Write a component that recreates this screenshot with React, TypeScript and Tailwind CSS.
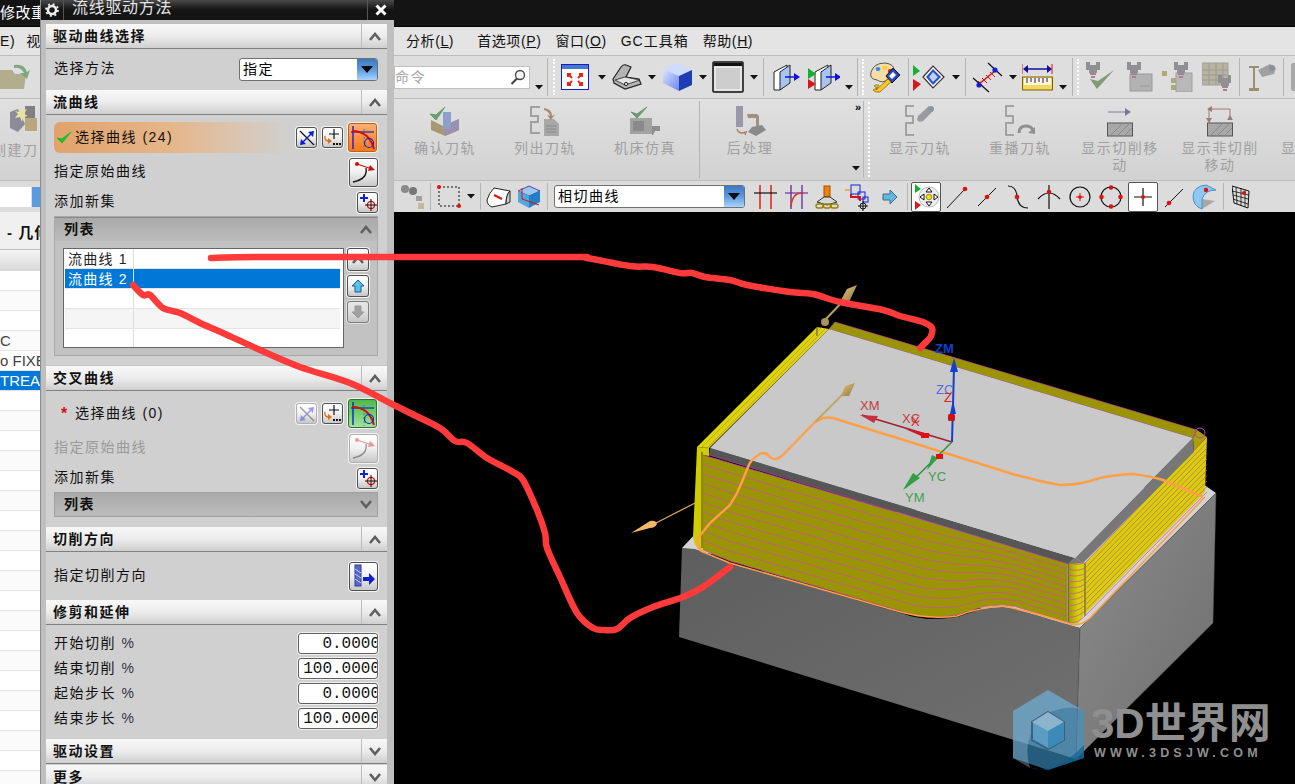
import React from "react";

const FONT = "font-['Liberation_Sans','Noto_Sans_CJK_SC',sans-serif]";

function Tri({ className = "" }: { className?: string }) {
  return (
    <svg width="8" height="5" viewBox="0 0 8 5" className={"shrink-0 " + className}>
      <path d="M0 0H8L4 4.5Z" fill="#111" />
    </svg>
  );
}
function Sep({ className = "" }: { className?: string }) {
  return <div className={"w-px self-stretch my-[2px] shrink-0 bg-[#b4b4b4] " + className} />;
}
function Grip({ className = "" }: { className?: string }) {
  return <div className={"w-[2px] self-stretch my-[3px] shrink-0 border-l-2 border-dotted border-white " + className} />;
}
function Ic({ w, h, className = "", children }: { w: number; h: number; className?: string; children: React.ReactNode }) {
  return (
    <svg width={w} height={h} viewBox={`0 0 ${w} ${h}`} className={"shrink-0 " + className}>
      {children}
    </svg>
  );
}

/* ---------- toolbar icons ---------- */
const FitIcon = () => (
  <Ic w={28} h={26}>
    <rect x="0.5" y="0.5" width="27" height="25" fill="#fff" stroke="#1020d0" />
    <rect x="1" y="1" width="26" height="4" fill="#4a78c8" />
    <g stroke="#f02010" strokeWidth="2" fill="none">
      <path d="M7 10l4 4M21 10l-4 4M7 21l4-4M21 21l-4-4" />
      <path d="M7 13v-3h3M21 13v-3h-3M7 18v3h3M21 18v3h-3" />
    </g>
  </Ic>
);
const SheetIcon = () => (
  <Ic w={30} h={26}>
    <path d="M1 15L9 3Q11 0 14 1L19 3 14 13 27 15 29 20 13 25 2 19Z" fill="#b4b4b4" stroke="#222" strokeWidth="1.2" />
    <path d="M3 16L13 13 28 16 13 21Z" fill="#e4e4e4" stroke="#222" strokeWidth=".8" />
    <circle cx="14" cy="20" r="1.6" fill="#eee" stroke="#222" />
  </Ic>
);
const CubeIcon = () => (
  <Ic w={31} h={30}>
    <defs>
      <linearGradient id="cb" x1="0" y1="0" x2="1" y2="1">
        <stop offset="0" stopColor="#dce6ff" />
        <stop offset="1" stopColor="#6a86ee" />
      </linearGradient>
    </defs>
    <path d="M1 7L14 1 30 8 17 14Z" fill="#cfdcfb" />
    <path d="M1 7L17 14V29L1 21Z" fill="url(#cb)" />
    <path d="M17 14L30 8V23L17 29Z" fill="#1f3cb4" />
  </Ic>
);
const RectIcon = () => (
  <Ic w={32} h={32}>
    <rect x="1" y="1" width="30" height="30" fill="#c8c8c8" rx="1" stroke="#111" strokeWidth="1.5" />
    <rect x="2" y="2" width="28" height="3" fill="#111" />
    <rect x="3" y="6" width="26" height="23" fill="#cdcdcd" stroke="#fff" />
  </Ic>
);
const PlaneIcon = ({ extra = false }: { extra?: boolean }) => (
  <Ic w={extra ? 32 : 28} h={27}>
    <g transform={extra ? "translate(6 0)" : ""}>
      <path d="M1 8L14 1V19L7 26H1Z" fill="#fff" stroke="#222" />
      <path d="M7 8L17 1V19L7 26Z" fill="#a8c4f0" stroke="#222" />
      <path d="M12 13H23" stroke="#1010e0" strokeWidth="1.5" />
      <path d="M21 9L27 13 21 17Z" fill="#1010e0" />
    </g>
    {extra && <path d="M0 4L8 10 0 15Z" fill="#14b030" />}
    {extra && <path d="M0 15L8 20 0 25Z" fill="#d81818" />}
  </Ic>
);
const PaletteIcon = () => (
  <Ic w={32} h={31}>
    <path d="M3 10Q6 1 17 1 26 2 26 8L24 14 20 17Q15 22 9 18 1 17 3 10Z" fill="#f6dca6" stroke="#555" />
    <ellipse cx="10" cy="7" rx="2.5" ry="2" fill="#2a90ff" />
    <ellipse cx="17" cy="6" rx="2.5" ry="2" fill="#f8d020" />
    <ellipse cx="22" cy="9" rx="2.2" ry="2" fill="#e02020" />
    <path d="M18 14L25 6 32 13 24 21Z" fill="#2c48c0" stroke="#111" />
    <path d="M21 14L25 10 28 13 24 17Z" fill="#fff" />
    <path d="M8 28L20 17 23 20 12 30Q7 31 5 28L9 26 6 24Q8 22 11 23Z" fill="#f4c820" stroke="#806000" strokeWidth=".7" />
  </Ic>
);
const ViewSetIcon = () => (
  <Ic w={32} h={30}>
    <path d="M0 3L7 9 0 14Z" fill="#14b030" />
    <path d="M0 17L8 22 0 29Z" fill="#d81818" />
    <path d="M10 15L20 4 31 15 20 26Z" fill="#fff" stroke="#333" strokeWidth="1.2" />
    <path d="M13 15L20 7 28 15 20 23Z" fill="#2d4ec8" />
    <path d="M16 15L20 10 25 15 20 20Z" fill="#bcd0f8" />
  </Ic>
);
const DottedLineIcon = () => (
  <Ic w={31} h={32}>
    <path d="M16 2L30 15M1 17L17 31" stroke="#111" strokeWidth="1.2" />
    <path d="M7 23L24 9" stroke="#e01010" strokeWidth="1.5" />
    <path d="M10 17l5 5M14 14l5 5M18 11l5 5M6 20l5 5" stroke="#e01010" />
    <circle cx="23" cy="9" r="2.6" fill="#1020e0" />
    <circle cx="7" cy="24" r="2.6" fill="#1020e0" />
  </Ic>
);
const RulerIcon = () => (
  <Ic w={31} h={28}>
    <path d="M0 1V11M30 1V11" stroke="#e01010" />
    <path d="M3 6H28" stroke="#1010a0" strokeWidth="1.5" />
    <path d="M6 2L1 6 6 10ZM25 2L30 6 25 10Z" fill="#1010a0" />
    <rect x="0.5" y="14" width="30" height="13" fill="#f2d860" stroke="#806000" />
    <rect x="2" y="15" width="27" height="7" fill="#fff8d0" />
    <path d="M5 15v5M9 15v4M13 15v5M17 15v4M21 15v5M25 15v4" stroke="#1010a0" />
  </Ic>
);
const GrayTool = () => (
  <g fill="#8f8f94">
    <path d="M3 0h4v3h6V0h4v8h-3v3h-8V8H3z" />
    <path d="M7 11h6v2H7zM8 14h4v2H8z" fill="#a88090" />
  </g>
);
const CheckTool = () => (
  <Ic w={31} h={30}>
    <GrayTool />
    <path d="M7 17L14 27 31 8 15 19Z" fill="#6f9060" opacity=".85" />
  </Ic>
);
const BoxTool = () => (
  <Ic w={29} h={30}>
    <rect x="6" y="12" width="22" height="17" fill="#b2b2b2" stroke="#999" />
    <GrayTool />
    <path d="M16 24h10" stroke="#999" />
  </Ic>
);
const TreeTool = () => (
  <Ic w={31} h={30}>
    <rect x="0" y="9" width="5" height="5" fill="#b0a878" />
    <rect x="9" y="16" width="5" height="5" fill="#b0a878" />
    <rect x="9" y="23" width="5" height="5" fill="#b0a878" />
    <rect x="14" y="11" width="16" height="19" fill="#b8b8b8" stroke="#a0a0a0" />
    <g transform="translate(9 0)"><GrayTool /></g>
  </Ic>
);
const GridTool = () => (
  <Ic w={29} h={30}>
    <rect x="0" y="1" width="26" height="22" fill="#b8b4a0" stroke="#a0a0a0" />
    <path d="M0 8H26M0 13H26M0 18H26M7 1V23M14 1V23M21 1V23" stroke="#9a9a9a" />
    <g transform="translate(13 13)"><GrayTool /></g>
  </Ic>
);
const PinTool = () => (
  <Ic w={28} h={30}>
    <path d="M1 4h10v2H7v20h4v3H1v-3h4V6H1z" fill="#9a9070" />
    <path d="M10 8L22 2 28 6 26 12 14 15Z" fill="#a0a0a0" />
    <circle cx="24" cy="6" r="3" fill="#8890a0" />
  </Ic>
);

/* ---------- ribbon icons ---------- */
const RConfirm = () => (
  <Ic w={32} h={30}>
    <path d="M2 14L14 20 30 13V24L16 30 2 24Z" fill="#a89a70" />
    <path d="M14 20L30 13V24L16 30Z" fill="#9a8fb0" />
    <rect x="14" y="6" width="8" height="17" fill="#8fa0c8" />
    <path d="M1 8L7 14 16 1 7 9Z" fill="#64a070" stroke="#64a070" />
  </Ic>
);
const RList = () => (
  <Ic w={30} h={30}>
    <path d="M10 1H1V10H8V16H1V27H10" fill="none" stroke="#a0a0a0" strokeWidth="2" />
    <path d="M14 13H24L29 18V30H14Z" fill="#a8a8a8" />
    <path d="M16 20h10M16 23h10M16 26h10" stroke="#888" />
    <path d="M14 2Q22 3 22 10L25 8 21 14 17 9 20 10Q19 5 14 4Z" fill="#a88868" />
  </Ic>
);
const RSim = () => (
  <Ic w={32} h={30}>
    <rect x="1" y="12" width="22" height="16" fill="#a2a2a2" />
    <rect x="4" y="15" width="11" height="10" fill="#8a8a8a" />
    <path d="M23 20h8v5h-5l-2 4h-1z" fill="#8e8e8e" />
    <path d="M2 6L8 12 18 1 8 8Z" fill="#6a9870" stroke="#6a9870" />
  </Ic>
);
const RPost = () => (
  <Ic w={32} h={32}>
    <rect x="2" y="1" width="7" height="21" fill="#9a98a8" />
    <path d="M13 9h10l2 2v11h-3v-9h-8z" fill="#a09080" />
    <path d="M18 22L28 20 32 25 22 31 14 27Z" fill="#8a8a8a" />
    <path d="M3 24Q5 30 12 27l-1 3" stroke="#b08060" strokeWidth="1.5" fill="none" />
  </Ic>
);
const RShow = () => (
  <Ic w={30} h={32}>
    <path d="M9 1H1V11H8V18H1V30H9" fill="none" stroke="#909090" strokeWidth="1.5" />
    <path d="M13 11L24 1 29 5 18 16Q14 18 12 15Z" fill="#9a9aa0" />
    <circle cx="26" cy="4" r="3" fill="#8898a8" />
  </Ic>
);
const RReplay = () => (
  <Ic w={30} h={32}>
    <path d="M9 1H1V11H8V18H1V30H9" fill="none" stroke="#909090" strokeWidth="1.5" />
    <path d="M14 28Q14 21 21 21 26 21 28 25" fill="none" stroke="#909090" strokeWidth="3" />
    <path d="M23 28L30 22V29Z" fill="#909090" />
  </Ic>
);
const RCut = () => (
  <Ic w={26} h={32}>
    <path d="M1 7H20" stroke="#7a7a98" />
    <path d="M18 3L24 7 18 11Z" fill="#7a7a98" />
    <rect x=".5" y="18" width="25" height="13" fill="#a8a8a8" stroke="#555" />
    <path d="M3 31L16 18M10 31L23 18M17 31L25 23" stroke="#8a8a8a" />
  </Ic>
);
const RNonCut = () => (
  <Ic w={28} h={32}>
    <path d="M3 14V4H24V14" fill="none" stroke="#a07878" />
    <path d="M6 1L1 4 6 7ZM0 13H6L3 18ZM21 15H27L24 10Z" fill="#a07878" />
    <rect x="1.5" y="18" width="25" height="13" fill="#a8a8a8" stroke="#555" />
    <path d="M4 31L17 18M11 31L24 18M18 31L26 23" stroke="#8a8a8a" />
  </Ic>
);

/* ---------- selection bar icons ---------- */
const S = {
  Filter: () => (
    <Ic w={24} h={26}>
      <circle cx="5" cy="5" r="4" fill="#8a8a8a" />
      <circle cx="13" cy="7" r="4" fill="#777" />
      <rect x="16" y="12" width="6" height="5" fill="#a0a0a0" />
      <rect x="18" y="19" width="6" height="6" fill="#c0b8a0" />
    </Ic>
  ),
  Dash: () => (
    <Ic w={24} h={24}>
      <rect x="2" y="2" width="20" height="19" fill="none" stroke="#111" strokeDasharray="2 2" />
      <circle cx="2" cy="2" r="2" fill="#e01010" />
      <circle cx="22" cy="21" r="2" fill="#e01010" />
    </Ic>
  ),
  Face: () => (
    <Ic w={25} h={22}>
      <path d="M1 14Q3 7 8 2L24 5Q20 9 20 18L6 21Q1 19 1 14Z" fill="#fff" stroke="#222" />
      <path d="M20 18Q20 9 24 5V16Z" fill="#ccc" stroke="#222" />
      <path d="M8 9L16 13" stroke="#e01010" strokeWidth="2" />
    </Ic>
  ),
  Box: () => (
    <Ic w={24} h={24}>
      <path d="M1 6L12 1 23 6 12 11Z" fill="#9bc8ef" stroke="#6040a0" />
      <path d="M1 6L12 11V23L1 17Z" fill="#50a8e0" />
      <path d="M12 11L23 6V17L12 23Z" fill="#2080c8" />
      <path d="M5 3V14L22 20" fill="none" stroke="#e01010" />
    </Ic>
  ),
  Cross: () => (
    <Ic w={23} h={24}>
      <path d="M6 0V24M17 0V24" stroke="#e01010" strokeWidth="1.4" />
      <path d="M0 8H23" stroke="#111" strokeWidth="1.2" />
    </Ic>
  ),
  Cross2: () => (
    <Ic w={23} h={24}>
      <path d="M6 0V24" stroke="#7030a0" strokeWidth="1.4" />
      <path d="M17 0V24" stroke="#7030a0" strokeWidth="1.4" />
      <path d="M0 8H23" stroke="#7030a0" strokeWidth="1.2" />
      <path d="M17 8Q7 8 6 22" stroke="#e03010" strokeWidth="1.4" fill="none" />
    </Ic>
  ),
  Chain: () => (
    <Ic w={24} h={24}>
      <rect x="9" y="1" width="6" height="11" fill="#f08010" stroke="#a05000" />
      <path d="M2 17L9 12H15L22 17 12 20Z" fill="#d8d8d8" stroke="#333" />
      <g fill="none" stroke="#998000" strokeWidth="1.4">
        <rect x="1" y="19" width="7" height="4" rx="2" />
        <rect x="8.5" y="19" width="7" height="4" rx="2" />
        <rect x="16" y="19" width="7" height="4" rx="2" />
      </g>
    </Ic>
  ),
  Color: () => (
    <Ic w={24} h={28}>
      <path d="M0 7H5" stroke="#f0a020" strokeWidth="1.5" />
      <rect x="6" y="2" width="9" height="9" fill="none" stroke="#1020e0" />
      <rect x="13" y="9" width="7" height="7" fill="none" stroke="#1020e0" />
      <rect x="18" y="14" width="5" height="5" fill="none" stroke="#1020e0" />
      <path d="M6 11V14H15V18" fill="none" stroke="#e01010" strokeWidth="2" />
      <circle cx="18" cy="23" r="3" fill="none" stroke="#111" />
      <path d="M13 23H23M18 18V28" stroke="#111" />
    </Ic>
  ),
  Arrow: () => (
    <Ic w={16} h={16}>
      <path d="M1 5H8V1L15 8 8 15V11H1Z" fill="#60b8e0" stroke="#406a80" />
    </Ic>
  ),
  Snap: () => (
    <Ic w={29} h={30}>
      <path d="M3 2L9 7 3 11Z" fill="#14b030" />
      <path d="M3 19L9 23 3 28Z" fill="#d81818" />
      <circle cx="17" cy="15" r="10" fill="#eee" stroke="#bbb" />
      <path d="M8 15l4-3v6zM26 15l-4-3v6zM17 6l-3 4h6zM17 24l-3-4h6z" fill="#fff" stroke="#111" />
      <circle cx="17" cy="15" r="2.8" fill="#f0e020" stroke="#a09000" />
    </Ic>
  ),
  End: () => (
    <Ic w={22} h={24}>
      <path d="M1 23L19 4" stroke="#111" />
      <circle cx="19" cy="4" r="2.3" fill="#e01010" />
    </Ic>
  ),
  Mid: () => (
    <Ic w={22} h={24}>
      <path d="M1 21L19 3" stroke="#111" />
      <circle cx="10" cy="12" r="2.3" fill="#e01010" />
    </Ic>
  ),
  Ctl: () => (
    <Ic w={22} h={24}>
      <path d="M1 1Q9 1 10 11 11 23 21 23" fill="none" stroke="#111" strokeWidth="1.2" />
      <circle cx="10" cy="12" r="2.3" fill="#e01010" />
    </Ic>
  ),
  Int: () => (
    <Ic w={24} h={24}>
      <path d="M1 14Q12 2 23 14M12 0V24" fill="none" stroke="#111" strokeWidth="1.2" />
      <circle cx="12" cy="7" r="2.3" fill="#e01010" />
    </Ic>
  ),
  Ctr: () => (
    <Ic w={22} h={22}>
      <circle cx="11" cy="11" r="10" fill="none" stroke="#111" strokeWidth="1.2" />
      <path d="M11 7v8M7 11h8" stroke="#e01010" />
      <circle cx="11" cy="11" r="1.8" fill="#e01010" />
    </Ic>
  ),
  Quad: () => (
    <Ic w={24} h={24}>
      <circle cx="12" cy="12" r="10" fill="none" stroke="#111" strokeWidth="1.2" />
      <circle cx="12" cy="2.5" r="2.3" fill="#e01010" />
      <circle cx="12" cy="21.5" r="2.3" fill="#e01010" />
      <circle cx="2.5" cy="12" r="2.3" fill="#e01010" />
      <circle cx="21.5" cy="12" r="2.3" fill="#e01010" />
    </Ic>
  ),
  Plus: () => (
    <Ic w={20} h={20}>
      <path d="M10 1V19M1 10H19" stroke="#111" strokeWidth="1.2" />
      <circle cx="10" cy="10" r="2" fill="#e01010" />
    </Ic>
  ),
  Tan: () => (
    <Ic w={20} h={22}>
      <path d="M1 21L19 3" stroke="#111" />
      <circle cx="5" cy="17" r="2.3" fill="#e01010" />
    </Ic>
  ),
  Surf: () => (
    <Ic w={25} h={26}>
      <path d="M10 15L23 17 10 25Z" fill="#a8a8a8" />
      <path d="M1 12Q2 2 14 1L24 6Q13 6 10 15L10 25Q1 22 1 12Z" fill="#8cc8f0" stroke="#4a90c8" />
      <circle cx="14" cy="6" r="2.2" fill="#e01010" />
    </Ic>
  ),
  Mesh: () => (
    <Ic w={18} h={24}>
      <path d="M0 1L17 6 16 23 2 18Z" fill="none" stroke="#111" />
      <path d="M0 6L17 10M1 10L16 14M1 14L16 19M4 2L5 19M9 3L9 21M13 5L13 22" stroke="#111" strokeWidth=".8" />
      <circle cx="12" cy="8" r="2" fill="#e01010" />
    </Ic>
  ),
};

/* ---------- dialog icons ---------- */
const Chev = ({ up = true }: { up?: boolean }) => (
  <svg width="12" height="9" viewBox="0 0 12 9" className="shrink-0">
    <path d={up ? "M1 8L6 2 11 8" : "M1 1L6 7 11 1"} fill="none" stroke="#5f5f5f" strokeWidth="2.6" />
  </svg>
);
function Btn({ w, h, className = "", children }: { w: string; h: string; className?: string; children: React.ReactNode }) {
  return (
    <div className={`${w} ${h} shrink-0 flex items-center justify-center rounded-[3px] border border-[#505050] shadow-[0_0_0_1px_#f2f2f2] bg-gradient-to-b from-[#ffffff] via-[#f0f0f0] to-[#c8c8c8] ${className}`}>
      {children}
    </div>
  );
}
const SwapIco = ({ dim = false }: { dim?: boolean }) => (
  <Ic w={16} h={16} className={dim ? "opacity-40" : ""}>
    <path d="M1 1L15 15" stroke="#111" strokeWidth="1.2" />
    <path d="M2 14L14 2" stroke="#1020d0" strokeWidth="1.5" />
    <path d="M15 1L9 2 14 7ZM1 15L7 14 2 9Z" fill="#1020d0" />
  </Ic>
);
const PlusMore = () => (
  <Ic w={19} h={17}>
    <path d="M11 0V10M6 5H16" stroke="#111" strokeWidth="1.2" />
    <path d="M2 7Q1 12 6 12" fill="none" stroke="#e07010" strokeWidth="1.4" />
    <path d="M5 9L9 12 5 15Z" fill="#e07010" />
    <path d="M10 14h2v2h-2zM13 14h2v2h-2zM16 14h2v2h-2z" fill="#111" />
  </Ic>
);
const CurveSel = () => (
  <Ic w={26} h={26}>
    <path d="M3 1V24" stroke="#1020d0" strokeWidth="1.4" />
    <path d="M1 7H24" stroke="#1020d0" strokeWidth="1.2" />
    <path d="M14 4V25" stroke="#10a060" strokeDasharray="2 2" />
    <path d="M2 6Q19 6 24 24" fill="none" stroke="#d01010" strokeWidth="2" />
    <circle cx="19" cy="18" r="4.5" fill="none" stroke="#1020d0" strokeWidth="1.2" />
  </Ic>
);
const OrigCurve = ({ dim = false }: { dim?: boolean }) => (
  <Ic w={24} h={24} className={dim ? "opacity-40" : ""}>
    <path d="M1 22Q16 19 14 8" fill="none" stroke="#111" strokeWidth="1.3" />
    <circle cx="5" cy="4" r="2" fill="#d01010" />
    <path d="M5 4L20 9" stroke="#d01010" strokeWidth="1.2" />
    <path d="M23 10L16 11 18 5Z" fill="#d01010" />
  </Ic>
);
const AddSet = () => (
  <Ic w={18} h={18}>
    <path d="M5 1V9M1 5H9" stroke="#1020e0" strokeWidth="2" />
    <circle cx="12" cy="12" r="3.6" fill="none" stroke="#e01010" strokeWidth="1.4" />
    <path d="M12 6V18M6 12H18" stroke="#111" />
  </Ic>
);
const DirIco = () => (
  <Ic w={24} h={24}>
    <rect x="3" y="1" width="6" height="21" fill="#5868c8" stroke="#2c3ca0" />
    <path d="M3 5L9 9M3 10L9 14M3 15L9 19" stroke="#c8d0f8" />
    <path d="M11 13H17V9L23 15 17 21V17H11Z" fill="#1020d0" />
  </Ic>
);

/* ---------- dialog pieces ---------- */
function Section({ title, up = true }: { title: string; up?: boolean }) {
  return (
    <div className="h-[25px] shrink-0 flex items-stretch bg-gradient-to-b from-[#f8f8f8] via-[#ececec] to-[#cfcfcf] border-b border-[#808080]">
      <div className="flex-1 pl-[7px] flex items-center text-[14px] font-bold tracking-[1.5px] text-[#111]">{title}</div>
      <div className="w-[26px] border-l border-[#bdbdbd] flex items-center justify-center"><Chev up={up} /></div>
    </div>
  );
}
function Label({ children, dim = false }: { children: React.ReactNode; dim?: boolean }) {
  return <span className={`-mt-[2px] text-[14px] tracking-[1.5px] whitespace-nowrap ${dim ? "text-[#9a9a9a]" : "text-[#111]"}`}>{children}</span>;
}
function Dropdown({ text, className = "" }: { text: string; className?: string }) {
  return (
    <div className={`h-[23px] flex items-stretch rounded-[3px] border border-[#707070] bg-white overflow-hidden ${className}`}>
      <div className="flex-1 pl-[3px] flex items-center text-[14px] tracking-[1.5px] text-black">{text}</div>
      <div className="w-[20px] flex items-center justify-center bg-gradient-to-b from-[#3c78c0] via-[#5c9ae0] to-[#a8d4f8]">
        <svg width="12" height="7" viewBox="0 0 12 7"><path d="M0 0H12L6 7Z" fill="#0a0a0a" /></svg>
      </div>
    </div>
  );
}
function NumRow({ label, value }: { label: string; value: string }) {
  return (
    <div className="h-[25px] flex items-center justify-between">
      <span className="flex mt-[2px]"><Label>{label} <span className="text-[#334]">%</span></Label></span>
      <div className="w-[80px] h-[21px] bg-white rounded-[3px] border border-[#606060] shadow-[0_0_0_1px_#efefef] overflow-hidden flex justify-end items-center">
        <span className="text-[16px] font-['Liberation_Mono',monospace] -mr-[3px] whitespace-nowrap text-[#111]">{value}</span>
      </div>
    </div>
  );
}
function ListRow({ text, sel, alt }: { text?: string; sel?: boolean; alt?: boolean }) {
  return (
    <div className={`h-[20px] flex border-b border-[#e4e4e4] ${sel ? "bg-[#0078d7] text-white" : alt ? "bg-[#f5f5f5] text-[#222]" : "bg-white text-[#222]"}`}>
      <div className={`w-[69px] pl-[3px] text-[14px] tracking-[1.2px] leading-[20px] border-r ${sel ? "border-[#d8e8f8]" : "border-[#dedede]"}`}>{text}</div>
    </div>
  );
}
function Dialog() {
  return (
    <div className={`absolute left-[40px] top-0 w-[354px] h-[784px] flex flex-col bg-[#bfbfbf] border-l border-[#8c8c8c] ${FONT}`}>
      <div className="h-[20px] shrink-0 flex items-center bg-gradient-to-b from-[#4a4a4a] via-[#141414] to-[#141414] text-[#e4e4e4] overflow-hidden">
        <div className="w-[22px] flex items-center justify-center">
          <svg width="14" height="14" viewBox="0 0 14 14">
            <circle cx="7" cy="7" r="4" fill="none" stroke="#eee" strokeWidth="2.6" />
            <circle cx="7" cy="7" r="6" fill="none" stroke="#eee" strokeWidth="1.8" strokeDasharray="2 2.7" />
          </svg>
        </div>
        <div className="w-px h-full bg-[#555]" />
        <div className="flex-1 pl-[8px] -mt-[4px] text-[16px] tracking-[0.7px] leading-[14px]">流线驱动方法</div>
        <div className="w-px h-full bg-[#555]" />
        <div className="w-[26px] flex items-center justify-center">
          <svg width="12" height="12" viewBox="0 0 12 12"><path d="M1.5 1.5L10.5 10.5M10.5 1.5L1.5 10.5" stroke="#fff" strokeWidth="3" /></svg>
        </div>
      </div>
      <div className="flex-1 mt-[4px] ml-[5px] mr-[7px] flex flex-col overflow-hidden bg-[#d0d0d0]">
        <Section title="驱动曲线选择" />
        <div className="h-[41px] shrink-0 pl-[8px] pr-[9px] flex items-center justify-between">
          <Label>选择方法</Label>
          <Dropdown text="指定" className="w-[139px]" />
        </div>
        <Section title="流曲线" />
        <div className="h-[251px] shrink-0 pl-[8px] pr-[9px] pt-[7px] flex flex-col border-b border-[#c4c4c4]">
          <div className="h-[31px] flex items-center">
            <div className="w-[236px] h-[31px] rounded-l-[6px] flex items-center bg-gradient-to-r from-[#e2a26a] via-[#e5b68a] to-[#d0d0d0] pl-[2px]">
              <svg width="16" height="14" viewBox="0 0 16 14"><path d="M1 7L6 12 15 1 6 8Z" fill="#18c030" stroke="#18c030" /></svg>
              <span className="ml-[3px] mt-[2px] flex"><Label>选择曲线 (24)</Label></span>
            </div>
            <Btn w="w-[21px]" h="h-[21px]" className="ml-[6px]"><SwapIco /></Btn>
            <Btn w="w-[21px]" h="h-[21px]" className="ml-[5px]"><PlusMore /></Btn>
            <Btn w="w-[29px]" h="h-[29px]" className="ml-[5px] !from-[#ffb070] !via-[#ff9040] !to-[#ff7818] !border-[#c06010]"><CurveSel /></Btn>
          </div>
          <div className="h-[30px] mt-[4px] flex items-center justify-between">
            <Label>指定原始曲线</Label>
            <Btn w="w-[29px]" h="h-[29px]"><OrigCurve /></Btn>
          </div>
          <div className="h-[22px] mt-[4px] flex items-center justify-between">
            <Label>添加新集</Label>
            <Btn w="w-[21px]" h="h-[21px]"><AddSet /></Btn>
          </div>
          <div className="h-[140px] mt-[3px] flex flex-col bg-[#c2c2c2] border border-[#a8a8a8]">
            <div className="h-[24px] shrink-0 flex items-center justify-between pl-[9px] pr-[5px] bg-gradient-to-b from-[#aaaaaa] to-[#bcbcbc] border-t border-[#888]">
              <span className="text-[14px] font-bold tracking-[1.5px] text-[#111]">列表</span>
              <Chev />
            </div>
            <div className="mt-[7px] ml-[8px] flex">
              <div className="w-[281px] h-[100px] border border-[#666] bg-white overflow-hidden pr-[3px] pl-[1px]">
                <ListRow text="流曲线 1" />
                <ListRow text="流曲线 2" sel />
                <ListRow />
                <ListRow alt />
                <ListRow />
              </div>
              <div className="ml-[3px] flex flex-col gap-[4px]">
                <Btn w="w-[22px]" h="h-[23px]"><Chev /></Btn>
                <Btn w="w-[22px]" h="h-[22px]">
                  <svg width="14" height="14" viewBox="0 0 14 14"><path d="M7 1L13 7H10V13H4V7H1Z" fill="#58c0e8" stroke="#1c5c90" /></svg>
                </Btn>
                <Btn w="w-[22px]" h="h-[22px]" className="opacity-60">
                  <svg width="14" height="14" viewBox="0 0 14 14"><path d="M7 13L13 7H10V1H4V7H1Z" fill="#8a8a8a" stroke="#808080" /></svg>
                </Btn>
              </div>
            </div>
          </div>
        </div>
        <Section title="交叉曲线" />
        <div className="h-[136px] shrink-0 pl-[8px] pr-[9px] pt-[7px] flex flex-col">
          <div className="h-[31px] flex items-center">
            <div className="w-[236px] flex items-center pl-[7px]">
              <span className="w-[14px] text-[#d01010] text-[16px] font-bold leading-[16px]">*</span>
              <span className="flex mt-[2px]"><Label>选择曲线 (0)</Label></span>
            </div>
            <Btn w="w-[21px]" h="h-[21px]" className="ml-[6px] !border-[#b0b0b0]"><SwapIco dim /></Btn>
            <Btn w="w-[21px]" h="h-[21px]" className="ml-[5px]"><PlusMore /></Btn>
            <Btn w="w-[29px]" h="h-[29px]" className="ml-[5px] !from-[#50b850] !via-[#70d070] !to-[#a8e0a0] !border-[#307030]"><CurveSel /></Btn>
          </div>
          <div className="h-[30px] mt-[4px] flex items-center justify-between">
            <Label dim>指定原始曲线</Label>
            <Btn w="w-[29px]" h="h-[29px]" className="!border-[#b0b0b0]"><OrigCurve dim /></Btn>
          </div>
          <div className="h-[22px] mt-[4px] flex items-center justify-between">
            <Label>添加新集</Label>
            <Btn w="w-[21px]" h="h-[21px]"><AddSet /></Btn>
          </div>
          <div className="h-[25px] mt-[3px] flex items-center justify-between pl-[9px] pr-[5px] bg-gradient-to-b from-[#aaaaaa] to-[#bcbcbc] border border-[#a0a0a0]">
            <span className="text-[14px] font-bold tracking-[1.5px] text-[#111]">列表</span>
            <Chev up={false} />
          </div>
        </div>
        <Section title="切削方向" />
        <div className="h-[48px] shrink-0 pl-[8px] pr-[9px] flex items-center justify-between">
          <Label>指定切削方向</Label>
          <Btn w="w-[29px]" h="h-[29px]"><DirIco /></Btn>
        </div>
        <Section title="修剪和延伸" />
        <div className="h-[114px] shrink-0 pl-[8px] pr-[9px] pt-[6px] flex flex-col">
          <NumRow label="开始切削" value="0.0000" />
          <NumRow label="结束切削" value="100.0000" />
          <NumRow label="起始步长" value="0.0000" />
          <NumRow label="结束步长" value="100.0000" />
        </div>
        <Section title="驱动设置" up={false} />
        <div className="h-px shrink-0 bg-[#d0d0d0]" />
        <Section title="更多" up={false} />
      </div>
    </div>
  );
}

/* ---------- menu ---------- */
function M({ t, k, className = "" }: { t: string; k: string; className?: string }) {
  return (
    <span className={"whitespace-nowrap " + className}>
      {t}(<span className="underline">{k}</span>)
    </span>
  );
}
function RibBtn({ label, label2, w = "w-[100px]", children }: { label: string; label2?: string; w?: string; children: React.ReactNode }) {
  return (
    <div className={`${w} shrink-0 flex flex-col items-center pt-[5px] text-[14px] tracking-[1.5px] leading-[17px] text-[#a0a0a0]`}>
      <div className="h-[33px] flex items-center justify-center">{children}</div>
      <span className="mt-[3px] whitespace-nowrap">{label}</span>
      {label2 && <span>{label2}</span>}
    </div>
  );
}

/* ---------- viewport drawing ---------- */
const BX = [703, 730, 897, 912, 927, 945, 957, 968, 980, 992, 1003, 1015, 1033, 1070];
const BY = [550, 561, 610, 614.5, 617, 616.5, 615, 611.5, 607.5, 605.5, 605, 606.5, 612, 623];
function bottomY(x: number) {
  for (let i = 0; i < BX.length - 1; i++) {
    if (x <= BX[i + 1]) {
      const t = (x - BX[i]) / (BX[i + 1] - BX[i]);
      return BY[i] + (BY[i + 1] - BY[i]) * t;
    }
  }
  return BY[BY.length - 1];
}
function topY(x: number) {
  return 455 + ((x - 703) * (563 - 455)) / 365;
}
function xs() {
  const r: number[] = [];
  for (let x = 703; x <= 1069; x += 4) r.push(x);
  return r;
}
function wallLine(t: number) {
  return xs()
    .map((x) => `${x},${(topY(x) + t * (bottomY(x) - topY(x))).toFixed(1)}`)
    .join(" ");
}
function wallPoly() {
  const p = xs();
  const a = p.map((x) => `${x},${topY(x).toFixed(1)}`);
  const b = p.map((x) => `${x},${bottomY(x).toFixed(1)}`).reverse();
  return a.concat(b).join(" ");
}
function facePoly() {
  const a = ["682,548", "695,549"];
  xs().forEach((x) => a.push(`${x},${(bottomY(x) + 2).toFixed(1)}`));
  a.push("1080,628", "1076,759", "679,637");
  return a.join(" ");
}
const TEN = [0, 0.1, 0.2, 0.3, 0.4, 0.5, 0.6, 0.7, 0.8, 0.9, 1];

function smooth(p: number[][]) {
  let d = `M${p[0][0]} ${p[0][1]}`;
  for (let i = 0; i < p.length - 1; i++) {
    const a = p[Math.max(i - 1, 0)];
    const b = p[i];
    const c = p[i + 1];
    const e = p[Math.min(i + 2, p.length - 1)];
    const c1x = b[0] + (c[0] - a[0]) / 6;
    const c1y = b[1] + (c[1] - a[1]) / 6;
    const c2x = c[0] - (e[0] - b[0]) / 6;
    const c2y = c[1] - (e[1] - b[1]) / 6;
    d += `C${c1x.toFixed(1)} ${c1y.toFixed(1)} ${c2x.toFixed(1)} ${c2y.toFixed(1)} ${c[0]} ${c[1]}`;
  }
  return d;
}
const RED1 = [
  [211, 258], [257, 257], [390, 257], [570, 257], [587, 258], [630, 266], [653, 267], [680, 273], [692, 273], [705, 277],
  [730, 280], [747, 285], [790, 292], [813, 294], [840, 302], [883, 310], [900, 316], [923, 322], [932, 328], [931, 336],
  [927, 341], [920, 348],
];
const RED2 = [
  [133, 285], [143, 295], [150, 295], [163, 308], [180, 313], [200, 323], [223, 333], [260, 350], [300, 367], [350, 383],
  [390, 403], [410, 413], [440, 428], [455, 441], [467, 443], [487, 458], [513, 472], [523, 480], [537, 510], [545, 533],
  [547, 548], [560, 577], [577, 613], [593, 628], [605, 630], [617, 629], [630, 618], [653, 607], [683, 597], [703, 587], [730, 567],
];

function Viewport() {
  return (
    <svg viewBox="40 212 1255 572" className="w-full h-full block">
      <defs>
        <linearGradient id="rf" x1="0" y1="0" x2="1" y2="1">
          <stop offset="0" stopColor="#8c8c8c" />
          <stop offset="1" stopColor="#6e6e6e" />
        </linearGradient>
        <linearGradient id="lf" x1="0" y1="0" x2="1" y2="1">
          <stop offset="0" stopColor="#5e5e5e" />
          <stop offset="1" stopColor="#707070" />
        </linearGradient>
        <linearGradient id="cnr" x1="0" y1="0" x2="1" y2="0">
          <stop offset="0" stopColor="#9a9400" />
          <stop offset=".6" stopColor="#d8d400" />
          <stop offset="1" stopColor="#d0cc00" />
        </linearGradient>
        <linearGradient id="gold" x1="0" y1="0" x2="1" y2="1">
          <stop offset="0" stopColor="#e8c880" />
          <stop offset="1" stopColor="#8a7440" />
        </linearGradient>
      </defs>
      {/* base block */}
      <polygon points="682,548 697,532 1200,482 1216,493 1080,628" fill="#d4d4d4" />
      <polygon points={facePoly()} fill="url(#lf)" />
      <polygon points="1080,628 1216,493 1213,623 1076,759" fill="url(#rf)" stroke="#505050" strokeWidth=".5" />
      {/* walls */}
      <polygon points="1085,563 1207,437 1205,492 1083,616" fill="#d6d200" />
      <polygon points="1193,438 1197,430 1207,437 1194,451" fill="#a8a200" />
      <polygon points={wallPoly()} fill="#9a9400" />
      <polygon points="1068,563 1085,563 1083,616 1078,624 1068,623" fill="url(#cnr)" />
      <polygon points="697,447 709,448 709,456 703,455 703,550 695,545 693,537" fill="#d0cc00" />
      <path d="M702 452V548" stroke="#333" strokeWidth=".9" />
      <path d="M1068 563V622" stroke="#333" strokeWidth=".8" />
      <path d="M1085 563V616" stroke="#333" strokeWidth=".8" />
      {TEN.map((t) => (
        <polyline key={t} points={wallLine(t)} fill="none" stroke="#d048b8" strokeWidth=".7" />
      ))}
      {TEN.map((t) => (
        <path key={t} d={`M1085 ${(563 + t * 53).toFixed(1)} L1207 ${(437 + t * 55).toFixed(1)}`} stroke="#d048b8" strokeWidth=".7" />
      ))}
      {TEN.map((t) => (
        <path key={t} d={`M1068 ${(563 + t * 60).toFixed(1)} Q1077 ${(566 + t * 58).toFixed(1)} 1085 ${(563 + t * 53).toFixed(1)}`} fill="none" stroke="#d048b8" strokeWidth=".7" />
      ))}
      {/* upper strips */}
      <polygon points="835,322 1197,430 1193,438 829,329" fill="#9a9400" stroke="#d040c0" strokeWidth=".6" />
      <polygon points="817,327 829,329 709,448 697,447" fill="#dad600" />
      <path d="M822 327L702 447M826 328L706 449" stroke="#c858c0" strokeWidth=".5" />
      <path d="M817 327V336" stroke="#555" />
      <polygon points="710,448 1075,558 1068,564 709,455" fill="#565656" />
      <path d="M709 455L1068 564" stroke="#d040c0" strokeWidth=".6" />
      <polygon points="1193,438 1194,452 1083,563 1075,558" fill="#777" />
      <polygon points="1068,564 1075,558 1083,563" fill="#777" />
      <polygon points="829,329 1193,438 1075,558 710,448" fill="#c9c9c9" />
      <circle cx="1200" cy="433" r="5" fill="none" stroke="#c040c0" />
      {/* tool path */}
      <path
        d="M815 422L823 418Q827 417 833 418L1000 470Q1030 480 1060 485 1080 485 1100 478 1120 474 1133 474 1150 476 1163 480L1187 490 1203 497"
        fill="none"
        stroke="#ff9f47"
        strokeWidth="2.6"
      />
      <path
        d="M815 422L783 455Q775 462 770 457 765 451 760 454 750 460 748 467 743 480 737 493L730 505 710 523 698 538Q695 547 703 552"
        fill="none"
        stroke="#ff9f47"
        strokeWidth="2.4"
      />
      <path
        d="M703 552L730 563 897 611Q927 620 957 616 980 607 1003 606 1033 612 1070 624 1080 627 1090 618L1205 497"
        fill="none"
        stroke="#ff9f47"
        strokeWidth="1.6"
      />
      {/* gold arrows */}
      <path d="M823 322L848 296" stroke="#b8a060" strokeWidth="2" />
      <path d="M857 285L847 289 841 300 849 302Z" fill="url(#gold)" />
      <circle cx="825" cy="322" r="4" fill="#a89060" />
      <path d="M815 422L847 390" stroke="#c0a868" strokeWidth="2" />
      <path d="M855 383L845 386 841 396 849 396Z" fill="url(#gold)" />
      <path d="M695 503L656 523" stroke="#e8a860" strokeWidth="1.2" />
      <path d="M631 533L650 521Q656 520 657 524 655 528 650 528Z" fill="#f0b868" />
      {/* triad */}
      <path d="M952 442L954 368" stroke="#1040d0" strokeWidth="2" />
      <path d="M954 358L950 372H958Z" fill="#1040d0" />
      <path d="M953 400L950 414H956Z" fill="#1040d0" />
      <rect x="948" y="414" width="7" height="7" rx="1.5" fill="#d01010" />
      <path d="M952 442L862 415" stroke="#a02030" strokeWidth="1.5" />
      <path d="M860 415L878 416 874 423Z" fill="#c83040" />
      <path d="M905 429L930 434 926 438Z" fill="#d01828" />
      <rect x="921" y="433" width="8" height="5" fill="#e01010" />
      <path d="M952 442L905 488" stroke="#309040" strokeWidth="1.5" />
      <path d="M903 490L920 478 913 473Z" fill="#30a040" />
      <path d="M927 470L938 458 932 455Z" fill="#30a040" />
      <rect x="936" y="454" width="7" height="5" fill="#e01010" />
      <g fontFamily="Liberation Sans, sans-serif" fontSize="13">
        <text x="935" y="353" fill="#1040d0" fontWeight="700">ZM</text>
        <text x="936" y="394" fill="#5070e0">ZC</text>
        <text x="944" y="402" fill="#e02020">Z</text>
        <text x="860" y="410" fill="#c04048">XM</text>
        <text x="902" y="423" fill="#c04048">XC</text>
        <text x="911" y="426" fill="#e02020">X</text>
        <text x="928" y="481" fill="#40a050">YC</text>
        <text x="905" y="502" fill="#40a050">YM</text>
      </g>
      {/* watermark */}
      <g>
        <polygon points="1048,690 1084,711 1084,758 1048,770 1013,758 1013,711" fill="#3c94cc" opacity=".62" />
        <path d="M1048 690L1013 711V758L1030 768Q1020 735 1048 713 1072 703 1084 711Z" fill="#a8c8dc" opacity=".35" />
        <path d="M1030 768Q1055 775 1084 745V758L1048 770Z" fill="#0a5a88" opacity=".6" />
        <polygon points="1048,712 1064,722 1064,740 1048,749 1032,740 1032,722" fill="#5b9cc4" stroke="#38617c" strokeWidth="2" />
        <polygon points="1048,712 1064,722 1048,731 1032,722" fill="#8cb4cc" />
        <polygon points="1048,731 1064,722 1064,740 1048,749" fill="#3c8ab8" />
      </g>
      <text x="1091" y="738" fill="#8f8f8f" fontFamily="Liberation Sans, Noto Sans CJK SC, sans-serif" fontWeight="700" fontSize="42">3D世界网</text>
      <text x="1094" y="757" fill="#8f8f8f" fontFamily="Liberation Sans, sans-serif" fontWeight="700" fontSize="12.5" letterSpacing="4.2">WWW.3DSJW.COM</text>
    </svg>
  );
}

const NavRows = [
  { t: "" }, { t: "" }, { t: "" },
  { t: "C" }, { t: "o FIXE" }, { t: "TREAM", sel: true },
  { t: "" }, { t: "" }, { t: "" }, { t: "" }, { t: "" }, { t: "" }, { t: "" }, { t: "" },
  { t: "" }, { t: "" }, { t: "" }, { t: "" }, { t: "" }, { t: "" }, { t: "" }, { t: "" },
  { t: "" }, { t: "" }, { t: "" }, { t: "" },
];

export default function App() {
  return (
    <div className={`relative w-[1295px] h-[784px] overflow-hidden bg-black flex flex-col ${FONT}`}>
      {/* title bar */}
      <div className="h-[27px] shrink-0 bg-[#141414] flex items-center border-b border-black text-white text-[15px] leading-none">
        <span className="tracking-[0.5px] mb-[2px]">修改重</span>
      </div>
      {/* menu */}
      <div className="h-[29px] shrink-0 bg-[#e4e4e4] border-b border-[#bdbdbd] flex items-center text-[14px] text-[#111] tracking-[0.6px]">
        <div className="w-[406px] flex shrink-0 whitespace-nowrap overflow-hidden">
          <span>E)</span><span className="ml-[11px]">视</span>
        </div>
        <M t="分析" k="L" />
        <M t="首选项" k="P" className="ml-[23px]" />
        <M t="窗口" k="O" className="ml-[14px]" />
        <span className="ml-[14px] whitespace-nowrap tracking-[1px]">GC工具箱</span>
        <M t="帮助" k="H" className="ml-[14px]" />
      </div>
      {/* toolbar 1 */}
      <div className="h-[43px] shrink-0 bg-[#dedede] border-b border-[#bdbdbd] flex items-center">
        <div className="w-[394px] shrink-0">
          <svg width="30" height="30" viewBox="0 0 30 30">
            <path d="M0 8H12L15 12H26L24 27H0Z" fill="#b0ae8c" />
            <path d="M14 3Q24 1 27 10L30 8 27 17 20 11 24 11Q21 5 14 6Z" fill="#80a880" />
          </svg>
        </div>
        <div className="w-[136px] h-[23px] shrink-0 bg-white border border-[#c0c0c0] flex items-center justify-between pr-[3px] text-[14px] tracking-[1.5px] text-[#a8a8a8]">
          <span>命令</span>
          <svg width="16" height="16" viewBox="0 0 16 16">
            <circle cx="10" cy="6" r="4.5" fill="#f4f4f4" stroke="#444" strokeWidth="1.3" />
            <path d="M7 9.5L1.5 15" stroke="#444" strokeWidth="2.2" />
          </svg>
        </div>
        <Tri className="ml-[5px] mt-[20px]" />
        <Sep className="ml-[4px]" />
        <Grip className="ml-[5px]" />
        <div className="ml-[6px] shrink-0"><FitIcon /></div>
        <Tri className="ml-[9px]" />
        <div className="ml-[6px] shrink-0"><SheetIcon /></div>
        <Tri className="ml-[6px]" />
        <div className="ml-[6px] shrink-0"><CubeIcon /></div>
        <Tri className="ml-[6px]" />
        <div className="ml-[5px] shrink-0"><RectIcon /></div>
        <Tri className="ml-[6px]" />
        <Sep className="ml-[5px]" />
        <div className="ml-[9px] shrink-0"><PlaneIcon /></div>
        <div className="ml-[7px] shrink-0"><PlaneIcon extra /></div>
        <Tri className="ml-[5px] mt-[20px]" />
        <Sep className="ml-[4px]" />
        <Grip className="ml-[4px]" />
        <div className="ml-[4px] shrink-0"><PaletteIcon /></div>
        <Sep className="ml-[8px]" />
        <div className="ml-[4px] shrink-0"><ViewSetIcon /></div>
        <Tri className="ml-[7px]" />
        <Sep className="ml-[5px]" />
        <div className="ml-[6px] shrink-0"><DottedLineIcon /></div>
        <Tri className="ml-[6px]" />
        <div className="ml-[5px] shrink-0"><RulerIcon /></div>
        <Tri className="ml-[6px] mt-[20px]" />
        <Sep className="ml-[5px]" />
        <Grip className="ml-[4px]" />
        <div className="ml-[4px] shrink-0"><CheckTool /></div>
        <div className="ml-[10px] shrink-0"><BoxTool /></div>
        <div className="ml-[9px] shrink-0"><TreeTool /></div>
        <div className="ml-[9px] shrink-0"><GridTool /></div>
        <Sep className="ml-[8px]" />
        <div className="ml-[8px] shrink-0"><PinTool /></div>
        <Sep className="ml-[7px]" />
        <div className="ml-[7px] w-[20px] h-[28px] shrink-0 bg-[#a8a8a8] rounded-[2px]" />
      </div>
      {/* ribbon */}
      <div className="h-[81px] shrink-0 bg-gradient-to-b from-[#e0e0e0] to-[#d2d2d2] flex items-stretch overflow-hidden">
        <div className="w-[395px] shrink-0 flex flex-col pt-[5px] text-[14px] tracking-[1.5px] text-[#a0a0a0]">
          <svg width="30" height="30" viewBox="0 0 30 30" className="ml-[8px]">
            <path d="M2 8L10 5 17 20 10 28 2 24Z" fill="#8c8c98" />
            <rect x="17" y="2" width="10" height="16" fill="#808080" />
            <rect x="17" y="14" width="12" height="13" fill="#b8a880" />
            <path d="M12 2l2 5 5-2-3 5 4 2-5 1-1 5-2-5-5 1 3-4-3-3 5 1z" fill="#e8e4a0" />
          </svg>
          <span className="mt-[6px] whitespace-nowrap -ml-[8px]">刨建刀</span>
        </div>
        <RibBtn label="确认刀轨"><RConfirm /></RibBtn>
        <RibBtn label="列出刀轨"><RList /></RibBtn>
        <RibBtn label="机床仿真"><RSim /></RibBtn>
        <Sep className="ml-[4px]" />
        <RibBtn label="后处理"><RPost /></RibBtn>
        <div className="w-[63px] shrink-0 flex flex-col items-end pr-[2px] pt-[3px] pb-[9px] justify-between">
          <span className="text-[11px] font-bold leading-[10px] text-black">»</span>
          <Tri className="mr-[1px]" />
        </div>
        <Sep className="bg-[#b8b8b8]" />
        <Grip className="ml-[4px]" />
        <RibBtn label="显示刀轨" w="w-[100px]"><RShow /></RibBtn>
        <RibBtn label="重播刀轨"><RReplay /></RibBtn>
        <RibBtn label="显示切削移" label2="动"><RCut /></RibBtn>
        <RibBtn label="显示非切削" label2="移动"><RNonCut /></RibBtn>
        <div className="ml-[11px] pt-[41px] text-[14px] text-[#a0a0a0] leading-[17px]">显</div>
      </div>
      {/* selection bar */}
      <div className="h-[32px] shrink-0 bg-[#dcdcdc] border-t border-[#bdbdbd] flex items-center">
        <div className="w-[400px] shrink-0 flex items-center">
          <div className="w-[31px] h-[20px] bg-white" />
          <div className="ml-[1px] w-[10px] h-[20px] bg-[#5c9ae0]" />
        </div>
        <div className="shrink-0"><S.Filter /></div>
        <Sep className="ml-[6px]" />
        <div className="ml-[6px] shrink-0"><S.Dash /></div>
        <Tri className="ml-[6px]" />
        <Sep className="ml-[5px]" />
        <div className="ml-[5px] shrink-0"><S.Face /></div>
        <div className="ml-[6px] shrink-0"><S.Box /></div>
        <Sep className="ml-[6px]" />
        <Dropdown text="相切曲线" className="ml-[6px] w-[191px]" />
        <div className="ml-[9px] shrink-0"><S.Cross /></div>
        <div className="ml-[8px] shrink-0"><S.Cross2 /></div>
        <div className="ml-[7px] shrink-0"><S.Chain /></div>
        <div className="ml-[6px] shrink-0"><S.Color /></div>
        <div className="ml-[13px] shrink-0"><S.Arrow /></div>
        <Sep className="ml-[9px]" />
        <div className="ml-[3px] w-[30px] h-[30px] shrink-0 bg-white border border-[#555] rounded-[2px] flex items-center justify-center"><S.Snap /></div>
        <div className="ml-[5px] shrink-0"><S.End /></div>
        <div className="ml-[9px] shrink-0"><S.Mid /></div>
        <div className="ml-[8px] shrink-0"><S.Ctl /></div>
        <div className="ml-[8px] shrink-0"><S.Int /></div>
        <div className="ml-[8px] shrink-0"><S.Ctr /></div>
        <div className="ml-[8px] shrink-0"><S.Quad /></div>
        <div className="ml-[5px] w-[30px] h-[30px] shrink-0 bg-white border border-[#555] rounded-[2px] flex items-center justify-center"><S.Plus /></div>
        <div className="ml-[6px] shrink-0"><S.Tan /></div>
        <div className="ml-[8px] shrink-0"><S.Surf /></div>
        <Sep className="ml-[6px]" />
        <div className="ml-[8px] shrink-0"><S.Mesh /></div>
      </div>
      {/* work area */}
      <div className="flex-1 min-h-0 flex">
        <div className="w-[40px] shrink-0 bg-white flex flex-col overflow-hidden">
          <div className="h-[37px] shrink-0 bg-[#f0f0f0] flex items-center pl-[7px] pt-[5px] text-[15px] font-bold text-[#111] whitespace-nowrap tracking-[1px]">- 几何</div>
          <div className="h-[22px] shrink-0 bg-gradient-to-b from-[#f4f4f4] to-[#d8d8d8] border-t border-[#bbb]" />
          {NavRows.map((r, i) => (
            <div
              key={i}
              className={`h-[20px] shrink-0 border-b border-[#e4e4e4] text-[15px] leading-[20px] whitespace-nowrap text-[#444] ${r.sel ? "bg-[#0078d7] text-white" : i % 2 ? "bg-[#fbfbfb]" : "bg-white"}`}
            >
              {r.t}
            </div>
          ))}
        </div>
        <div className="flex-1 min-w-0 bg-black"><Viewport /></div>
      </div>
      <Dialog />
      {/* hand-drawn red annotation */}
      <svg viewBox="0 0 1295 784" className="absolute inset-0 w-full h-full pointer-events-none">
        <g fill="none" stroke="#ff3a3a" strokeWidth="6.5" strokeLinecap="round" strokeLinejoin="round">
          <path d={smooth(RED1)} />
          <path d={smooth(RED2)} />
        </g>
      </svg>
    </div>
  );
}
